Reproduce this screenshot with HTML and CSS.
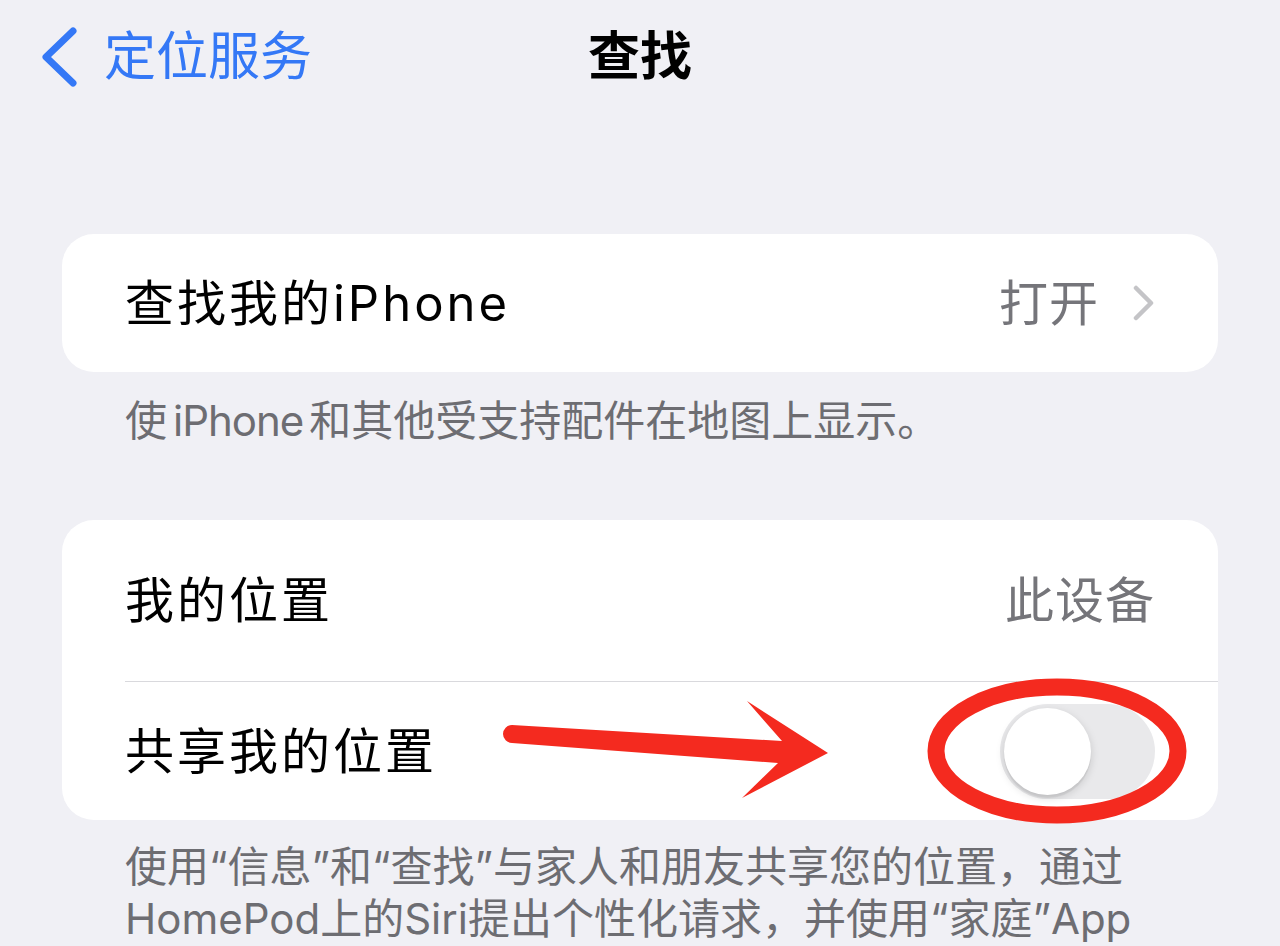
FILE: index.html
```html
<!DOCTYPE html>
<html lang="zh-CN">
<head>
    <meta charset="UTF-8">
    <title>查找</title>
    <link rel="stylesheet" href="styles.css">
</head>
<body>
    <div class="page">
        <div class="nav">
            <a class="back" href="#">
                <svg class="back-icon" width="40" height="60" viewBox="0 0 40 60">
                    <path d="M33 4 L6 30 L33 56" fill="none" stroke="#3478f6" stroke-width="7" stroke-linecap="round" stroke-linejoin="round"/>
                </svg>
                <span>定位服务</span>
            </a>
            <div class="title">查找</div>
            <div></div>
        </div>

        <div class="card card-first">
            <div class="row">
                <span class="label">查找我的iPhone</span>
                <span class="value">打开
                    <svg class="chevron" width="22" height="36" viewBox="0 0 22 36">
                        <path d="M3 3 L18 18 L3 33" fill="none" stroke="#c4c4c7" stroke-width="4.5" stroke-linecap="round" stroke-linejoin="round"/>
                    </svg>
                </span>
            </div>
        </div>
        <div class="footer">使<span class="latin">iPhone</span>和其他受支持配件在地图上显示。</div>

        <div class="card card-second">
            <div class="row row-tall">
                <span class="label">我的位置</span>
                <span class="value">此设备</span>
            </div>
            <div class="separator"></div>
            <div class="row">
                <span class="label">共享我的位置</span>
                <div class="switch"><div class="knob"></div></div>
            </div>
        </div>
        <div class="footer footer-long">使用“信息”和“查找”与家人和朋友共享您的位置，通过<br>HomePod上的Siri提出个性化请求，并使用“家庭”App</div>

        <!-- red annotation drawn over the screenshot -->
        <svg class="markup" width="1280" height="946" viewBox="0 0 1280 946">
            <path d="M512 725 L782 741 L747 701 L828 753 L742 798 L778 763 L512 743 A9 9 0 0 1 512 725 Z" fill="#f42a1f"/>
            <ellipse cx="1057" cy="751" rx="121" ry="64" fill="none" stroke="#f42a1f" stroke-width="17"/>
        </svg>
    </div>
</body>
</html>
```

FILE: styles.css
```css
body {
    margin: 0;
    background-color: #f0f0f5;
    font-family: 'Inter', 'Noto Sans CJK SC', sans-serif;
    color: #000;
}
.page {
    position: relative;
    width: 1280px;
    height: 946px;
    overflow: hidden;
}
.nav {
    height: 114px;
    display: grid;
    grid-template-columns: 1fr auto 1fr;
    align-items: center;
}
.back {
    display: flex;
    align-items: center;
    gap: 24px;
    padding-left: 40px;
    color: #3478f6;
    text-decoration: none;
    font-size: 52px;
    line-height: 1;
}
.back-icon {
    display: block;
}
.title {
    font-size: 52px;
    font-weight: 700;
    line-height: 1;
}
.card {
    margin: 0 62px;
    background: #fff;
    border-radius: 32px;
}
.card-first {
    margin-top: 120px;
}
.card-second {
    margin-top: 73px;
}
.row {
    height: 138px;
    display: flex;
    align-items: center;
    justify-content: space-between;
    padding: 0 63px;
}
.row-tall {
    height: 161px;
}
.label {
    font-size: 49px;
    letter-spacing: 3px;
    line-height: 1;
}
.value {
    display: flex;
    align-items: center;
    gap: 34px;
    font-size: 49px;
    letter-spacing: 1px;
    line-height: 1;
    color: #75757a;
}
.chevron {
    display: block;
}
.separator {
    height: 1px;
    margin-left: 63px;
    background: #d9d9dd;
}
.switch {
    width: 155px;
    height: 95px;
    border-radius: 48px;
    background: #e9e9eb;
    padding: 4px;
    box-sizing: border-box;
}
.knob {
    width: 87px;
    height: 87px;
    border-radius: 50%;
    background: #fff;
    box-shadow: 0 3px 8px rgba(0, 0, 0, 0.15), 0 3px 1px rgba(0, 0, 0, 0.06);
}
.footer {
    padding: 23px 40px 0 125px;
    font-size: 42px;
    line-height: 52px;
    color: #6d6d72;
}
.footer .latin {
    margin: 0 6px;
    letter-spacing: -1px;
}
.footer-long {
    padding-top: 21px;
    white-space: nowrap;
}
.markup {
    position: absolute;
    top: 0;
    left: 0;
    pointer-events: none;
}
```
